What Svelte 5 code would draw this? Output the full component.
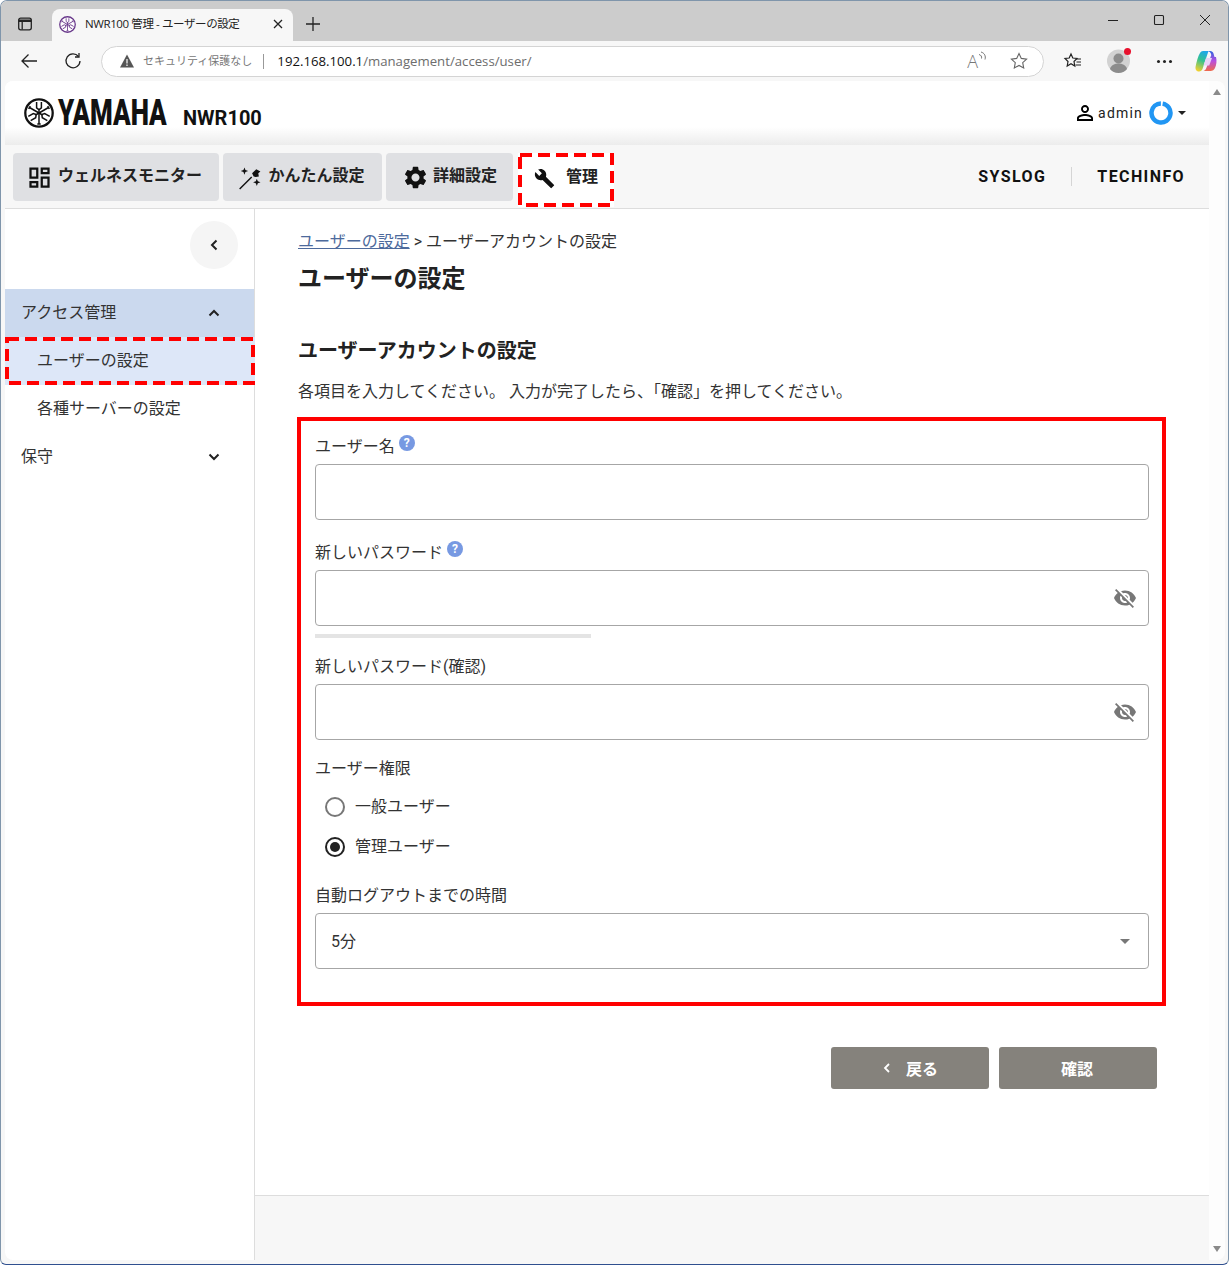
<script>
  const nav = [
    { label: 'ウェルネスモニター', icon: 'M19 5v2h-4V5h4M9 5v6H5V5h4m10 8v6h-4v-6h4M9 17v2H5v-2h4M21 3h-8v6h8V3zM11 3H3v10h8V3zm10 8h-8v10h8V11zm-10 4H3v6h8v-6z', w: 206 },
    { label: 'かんたん設定', icon: 'M2.800 21.800 13.500 11.200l.9.9L3.700 22.700zM14.300 8.300 18 4.600l3.700 2-1.900 1.700.5 2.700-2.700.5-1.900-.3zM7.500 3l.9 2.400 2.400.9-2.400.9-.9 2.400-.9-2.400-2.400-.9 2.400-.9zM18.500 13l.9 2.400 2.400.9-2.400.9-.9 2.400-.9-2.400-2.400-.9 2.400-.9z', w: 159 },
    { label: '詳細設定', icon: 'M19.14 12.94c.04-.3.06-.61.06-.94 0-.32-.02-.64-.07-.94l2.03-1.58c.18-.14.23-.41.12-.61l-1.92-3.32c-.12-.22-.37-.29-.59-.22l-2.39.96c-.5-.38-1.03-.7-1.62-.94l-.36-2.54c-.04-.24-.24-.41-.48-.41h-3.84c-.24 0-.43.17-.47.41l-.36 2.54c-.59.24-1.13.57-1.62.94l-2.39-.96c-.22-.08-.47 0-.59.22L2.74 8.87c-.12.21-.08.47.12.61l2.03 1.58c-.05.3-.09.63-.09.94s.02.64.07.94l-2.03 1.58c-.18.14-.23.41-.12.61l1.92 3.32c.12.22.37.29.59.22l2.39-.96c.5.38 1.03.7 1.62.94l.36 2.54c.05.24.24.41.48.41h3.84c.24 0 .44-.17.47-.41l.36-2.54c.59-.24 1.13-.56 1.62-.94l2.39.96c.22.08.47 0 .59-.22l1.92-3.32c.12-.22.07-.47-.12-.61l-2.01-1.58zM12 15.6c-1.98 0-3.6-1.62-3.6-3.6s1.62-3.6 3.6-3.6 3.6 1.62 3.6 3.6-1.62 3.6-3.6 3.6z', w: 127 }
  ];
  const eye = 'M12 7c2.76 0 5 2.24 5 5 0 .65-.13 1.26-.36 1.83l2.92 2.92c1.51-1.26 2.7-2.89 3.43-4.75-1.73-4.39-6-7.5-11-7.5-1.4 0-2.74.25-3.98.7l2.16 2.16C10.74 7.13 11.35 7 12 7zM2 4.27l2.28 2.28.46.46C3.08 8.3 1.78 10.02 1 12c1.73 4.39 6 7.5 11 7.5 1.55 0 3.03-.3 4.38-.84l.42.42L19.73 22 21 20.73 3.27 3 2 4.27zM7.53 9.8l1.55 1.55c-.05.21-.08.43-.08.65 0 1.66 1.34 3 3 3 .22 0 .44-.03.65-.08l1.55 1.55c-.67.33-1.41.53-2.2.53-2.76 0-5-2.24-5-5 0-.79.2-1.53.53-2.2zm4.31-.78l3.15 3.15.02-.16c0-1.66-1.34-3-3-3l-.17.01z';
  const forks = [0, 120, 240];
</script>

{#snippet emblem(size, color)}
  <svg width={size} height={size} viewBox="0 0 30 30" class="noflex">
    <circle cx="15" cy="15" r="13.700" fill="#fff" stroke={color} stroke-width="2.300" />
    {#each forks as a}
      <g transform="rotate({a} 15 15)" fill="none" stroke={color} stroke-width="1.500">
        <path d="M15 10.500V26M12.600 4v5.800l2.400 2 2.400-2V4M13.300 26h3.400" />
      </g>
    {/each}
  </svg>
{/snippet}

<div class="window">
  <div class="tabstrip">
    <svg class="tabicon" width="16" height="16" viewBox="0 0 16 16" fill="none" stroke="#222" stroke-width="1.300"><rect x="1.700" y="2.200" width="12.600" height="11.600" rx="2" /><path d="M1.700 4.700h12.600" stroke-width="2.600" /><path d="M5.200 5v8.600" /></svg>
    <div class="tab">
      <span class="fav">{@render emblem(17, '#6a3a8c')}</span>
      <span class="tabtitle">NWR100 管理 - ユーザーの設定</span>
      <svg width="12" height="12" viewBox="0 0 12 12" stroke="#222" stroke-width="1.300"><path d="M2 2l8 8M10 2l-8 8" /></svg>
    </div>
    <svg class="plus" width="16" height="16" viewBox="0 0 16 16" stroke="#222" stroke-width="1.300"><path d="M8 1v14M1 8h14" /></svg>
    <div class="wincontrols">
      <svg width="12" height="12" viewBox="0 0 12 12" stroke="#222"><path d="M1 6.500h10" /></svg>
      <svg width="12" height="12" viewBox="0 0 12 12" stroke="#222" fill="none" stroke-width="1.100"><rect x="1.500" y="1.500" width="9" height="9" rx="1" /></svg>
      <svg width="12" height="12" viewBox="0 0 12 12" stroke="#222"><path d="M1 1l10 10M11 1L1 11" /></svg>
    </div>
  </div>

  <div class="toolbar">
    <svg class="backicon" width="18" height="18" viewBox="0 0 18 18" fill="none" stroke="#222" stroke-width="1.300"><path d="M17 9H2M8.500 2.500 2 9l6.500 6.500" /></svg>
    <svg class="reload" width="18" height="18" viewBox="0 0 18 18" fill="none" stroke="#222" stroke-width="1.300"><path d="M14.500 4.500A7 7 0 1 0 16 9" /><path d="M15 1v4h-4" /></svg>
    <div class="omnibox">
      <svg width="16" height="16" viewBox="0 0 16 16"><path d="M8 1.500 15 14.500H1z" fill="#555" /><path d="M8 6v4.500M8 11.500v1.500" stroke="#fff" stroke-width="1.200" /></svg>
      <span class="insecure">セキュリティ保護なし</span>
      <span class="sep"></span>
      <span class="url"><b>192.168.100.1</b>/management/access/user/</span>
      <span class="grow"></span>
      <span class="readaloud">A<svg width="9" height="11" viewBox="0 0 9 11" fill="none" stroke="#777"><path d="M1 3.500c2 .5 3 2 2.500 4M3 1c3.500 1 5 4 4 7.500" /></svg></span>
      <svg width="20" height="20" viewBox="0 0 20 20" fill="none" stroke="#666" stroke-width="1.100"><path d="M10 2.500l2.300 4.900 5.300.7-3.900 3.600 1 5.300-4.700-2.600-4.700 2.600 1-5.300-3.900-3.600 5.300-.7z" /></svg>
    </div>
    <svg class="fav-star" width="20" height="20" viewBox="0 0 20 20" fill="none" stroke="#222" stroke-width="1.200"><path d="M8 3l1.800 4 4.200.5-3 3 .8 4.500L8 12.800 4.200 15l.8-4.500-3-3L6.200 7z" /><path d="M13 8h5M13.500 11h4.500M12.500 14h5.500" /></svg>
    <span class="avatar">
      <svg width="23" height="24" viewBox="0 0 23 24"><circle cx="11.500" cy="12" r="11.500" fill="#d2d2d2" /><circle cx="11.500" cy="9.500" r="5" fill="#8c8c8c" /><path d="M3 20c1-4 5-5.500 8.500-5.500S19 16 20 20c-2 2.500-5 4-8.500 4S5 22.500 3 20z" fill="#8c8c8c" /></svg>
      <i class="dot"></i>
    </span>
    <span class="more"><i></i><i></i><i></i></span>
    <svg class="copilot" width="24" height="24" viewBox="0 0 24 24">
      <defs>
        <linearGradient id="cpa" x1="0.600" y1="0" x2="0.300" y2="1"><stop offset="0" stop-color="#1fa8e8" /><stop offset="0.45" stop-color="#35c28f" /><stop offset="1" stop-color="#f2d02e" /></linearGradient>
        <linearGradient id="cpb" x1="0.500" y1="0" x2="0.500" y2="1"><stop offset="0" stop-color="#2a63e0" /><stop offset="0.5" stop-color="#b84fe0" /><stop offset="1" stop-color="#f06a4a" /></linearGradient>
      </defs>
      <path d="M9 2h5.500L8.500 20c-.6 1.600-1.800 2.500-3.300 2.500C2.600 22.500 1 20.500 1.600 17.500 2.500 13 4 7 6 4c.8-1.300 1.800-2 3-2z" fill="url(#cpa)" />
      <path d="M13 2h3c1.800 0 3 .8 3.600 2.800l.9 3.200H22c1 3.500.5 8-1 11-.9 2-2.400 3-4.500 3H9.500c1.300-.4 2.300-1.400 2.800-3L17.300 6c-.4-2.400-2-4-4.300-4z" fill="url(#cpb)" />
      <path d="M12 9h6l-2.800 7.500H9.500z" fill="#e9d4f7" />
    </svg>
  </div>

  <div class="viewport">
    <div class="page">
      <header class="head">
        <div class="brand">
          {@render emblem(30, '#111')}
          <span class="yamaha"><span>YAMAHA</span></span>
          <span class="model">NWR100</span>
        </div>
        <div class="user">
          <svg width="24" height="24" viewBox="0 0 24 24"><path d="M12 5.900c1.160 0 2.100.94 2.100 2.100s-.94 2.100-2.100 2.100S9.900 9.160 9.900 8s.94-2.100 2.100-2.100m0 9c2.970 0 6.100 1.460 6.100 2.100v1.100H5.900V17c0-.64 3.130-2.100 6.100-2.100M12 4C9.790 4 8 5.790 8 8s1.790 4 4 4 4-1.790 4-4-1.790-4-4-4zm0 9c-2.670 0-8 1.340-8 4v3h16v-3c0-2.660-5.330-4-8-4z" /></svg>
          <span class="uname">admin</span>
          <svg width="24" height="24" viewBox="0 0 24 24" fill="none"><circle cx="12" cy="12" r="9.500" stroke="#2196f3" stroke-width="4.500" stroke-dasharray="57.500 2.200" transform="rotate(-80 12 12)" /></svg>
          <i class="caret"></i>
        </div>
      </header>

      <nav class="nav">
        {#each nav as n}
          <button class="navbtn" style="width:{n.w}px">
            <svg width="27" height="27" viewBox="0 0 24 24" fill="#111"><path d={n.icon} /></svg>
            <span>{n.label}</span>
          </button>
        {/each}
        <button class="navbtn active">
          <svg width="21" height="21" viewBox="0 0 24 24" fill="#111"><path d="M22.700 19l-9.100-9.100c.9-2.300.4-5-1.500-6.900-2-2-5-2.400-7.400-1.300L9 6 6 9 1.600 4.700C.4 7.100.9 10.100 2.900 12.100c1.900 1.900 4.600 2.400 6.900 1.500l9.100 9.100c.4.4 1 .4 1.400 0l2.300-2.300c.5-.4.5-1.100.1-1.400z" /></svg>
          <span>管理</span>
          <svg class="dash" width="96" height="54" viewBox="0 0 96 54"><rect x="2" y="2" width="92" height="50" /></svg>
        </button>
        <span class="grow"></span>
        <a class="extlink">SYSLOG</a>
        <span class="navsep"></span>
        <a class="extlink">TECHINFO</a>
      </nav>

      <div class="body">
        <aside class="side">
          <div class="collapse-row">
            <span class="circle"><svg width="16" height="16" viewBox="0 0 16 16" fill="none" stroke="#222" stroke-width="2"><path d="M10.500 3.500 6 8l4.500 4.500" /></svg></span>
          </div>
          <div class="row group open"><span>アクセス管理</span><svg width="16" height="16" viewBox="0 0 16 16" fill="none" stroke="#222" stroke-width="2"><path d="M3.500 10.500 8 6l4.500 4.500" /></svg></div>
          <div class="row item selected">
            <span>ユーザーの設定</span>
            <svg class="dash" width="250" height="48" viewBox="0 0 250 48"><rect x="2" y="2" width="246" height="44" /></svg>
          </div>
          <div class="row item"><span>各種サーバーの設定</span></div>
          <div class="row group"><span>保守</span><svg width="16" height="16" viewBox="0 0 16 16" fill="none" stroke="#222" stroke-width="2"><path d="M3.500 5.500 8 10l4.500-4.500" /></svg></div>
        </aside>

        <main class="main">
          <div class="content">
            <div class="crumb"><a>ユーザーの設定</a> &gt; ユーザーアカウントの設定</div>
            <h1>ユーザーの設定</h1>
            <h2>ユーザーアカウントの設定</h2>
            <p class="desc">各項目を入力してください。 入力が完了したら、「確認」を押してください。</p>

            <form class="box">
              <label class="lab">ユーザー名<span class="help">?</span></label>
              <div class="input mb20"></div>

              <label class="lab">新しいパスワード<span class="help">?</span></label>
              <div class="input"><svg width="24" height="24" viewBox="0 0 24 24" fill="#777"><path d={eye} /></svg></div>
              <div class="meter"></div>

              <label class="lab">新しいパスワード(確認)</label>
              <div class="input mb16"><svg width="24" height="24" viewBox="0 0 24 24" fill="#777"><path d={eye} /></svg></div>

              <label class="lab">ユーザー権限</label>
              <div class="radios">
                <div class="radio"><i class="rb"></i><span>一般ユーザー</span></div>
                <div class="radio"><i class="rb on"></i><span>管理ユーザー</span></div>
              </div>

              <label class="lab">自動ログアウトまでの時間</label>
              <div class="input select"><span>5分</span><i class="selcaret"></i></div>
            </form>

            <div class="actions">
              <button class="act"><svg width="14" height="14" viewBox="0 0 14 14" fill="none" stroke="#fff" stroke-width="1.800"><path d="M9 3 5 7l4 4" /></svg><span>戻る</span></button>
              <button class="act"><span>確認</span></button>
            </div>
          </div>
          <footer class="foot"></footer>
        </main>
      </div>
    </div>
    <div class="scrollbar"><i class="up"></i><i class="down"></i></div>
  </div>
</div>

<style>
  :global(body) { margin: 0; }
  * { box-sizing: border-box; }
  .noflex { flex: none; display: block; }
  .grow { flex: 1; }
  .window {
    width: 1229px; height: 1265px; background: #f7f7f7; display: flex; flex-direction: column;
    font-family: Roboto, "Noto Sans CJK JP", sans-serif; color: #333; overflow: hidden;
    border: 1px solid #7f95ab; border-bottom-color: #2f4f8f; border-radius: 7px 7px 6px 6px;
  }
  .tabstrip { height: 40px; background: #cccccc; display: flex; align-items: flex-end; flex: none; position: relative; }
  .tabicon { margin: 0 19px 9px 16px; }
  .tab {
    width: 241px; height: 32px; background: #f7f7f7; border-radius: 8px 8px 0 0; display: flex; align-items: center;
    padding: 0 9px 2px 7px; font: 11.500px/16px "Open Sans", "Noto Sans CJK JP", sans-serif; color: #222;
  }
  .fav { margin-right: 9px; flex: none; }
  .tabtitle { flex: 1; white-space: nowrap; overflow: hidden; letter-spacing: -0.400px; }
  .plus { margin: 0 0 9px 12px; }
  .wincontrols { margin-left: auto; display: flex; gap: 34px; margin-right: 17px; align-self: center; margin-top: -3px; }
  .toolbar { height: 40px; flex: none; display: flex; align-items: center; background: #f7f7f7; padding-left: 19px; }
  .reload { margin-left: 26px; }
  .omnibox {
    margin-left: 19px; width: 943px; height: 31px; background: #fff; border: 1px solid #d4d4d4; border-radius: 16px;
    display: flex; align-items: center; padding: 0 14px 0 17px; font-family: "Open Sans", "Noto Sans CJK JP", sans-serif;
  }
  .insecure { color: #777; margin: 0 0 0 8px; font-size: 11px; line-height: 16px; white-space: nowrap; }
  .sep { width: 1px; height: 15px; background: #999; margin: 0 13px 0 11px; }
  .url { color: #6d6d6d; white-space: nowrap; font-size: 13.200px; line-height: 16px; }
  .url b { font-weight: 400; color: #111; }
  .readaloud { color: #777; font-size: 18px; line-height: 20px; font-weight: 300; margin-right: 22px; display: flex; align-items: flex-start; }
  .fav-star { margin-left: 19px; }
  .avatar { position: relative; margin-left: 24px; display: block; height: 24px; }
  .dot { position: absolute; right: -1px; top: -1px; width: 7px; height: 7px; border-radius: 50%; background: #e8112d; }
  .more { display: flex; gap: 3px; margin-left: 27px; }
  .more i { width: 3px; height: 3px; background: #222; border-radius: 50%; }
  .copilot { margin-left: 22px; }

  .viewport { flex: 1; display: flex; margin: 0 3px 4px 4px; min-height: 0; }
  .page { width: 1204px; display: flex; flex-direction: column; background: #fff; border-radius: 8px 0 0 8px; overflow: hidden; }
  .scrollbar { width: 16px; background: #fdfdfd; display: flex; flex-direction: column; justify-content: space-between; align-items: center; padding: 8px 0; border-radius: 0 8px 8px 0; }
  .up { border: 4.500px solid transparent; border-top: 0; border-bottom: 6px solid #8a8a8a; }
  .down { border: 4.500px solid transparent; border-bottom: 0; border-top: 6px solid #8a8a8a; }

  .head {
    height: 64px; flex: none; display: flex; align-items: center; justify-content: space-between;
    background: linear-gradient(#fff 0, #fff 72%, #ececec 100%); padding: 0 23px 0 19px;
  }
  .brand { display: flex; align-items: center; }
  .yamaha { display: block; width: 109px; height: 36px; margin-left: 4px; }
  .yamaha span {
    display: inline-block; font: 900 36px/36px Roboto, sans-serif; color: #111; transform: scaleX(0.720);
    transform-origin: left center; white-space: nowrap;
  }
  .model { font: 700 20px/24px Roboto, sans-serif; color: #111; margin: 10px 0 0 16px; }
  .user { display: flex; align-items: center; color: #222; font-size: 14px; }
  .uname { margin: 0 6px 0 1px; letter-spacing: 1.200px; }
  .caret { margin-left: 5px; border: 4px solid transparent; border-top: 4px solid #222; border-bottom: 0; }

  .nav { height: 64px; flex: none; display: flex; align-items: flex-start; background: #f7f7f7; border-bottom: 1px solid #ddd; padding: 8px 24px 0 8px; }
  .navbtn {
    height: 48px; margin-right: 4px; border: 0; border-radius: 4px; background: #dfe0e3; display: flex; align-items: center; justify-content: center; gap: 5px;
    font: 700 16px/24px Roboto, "Noto Sans CJK JP", sans-serif; color: #222; padding: 0 4px 0 0; position: relative;
  }
  .navbtn:nth-child(3) { padding-right: 0; gap: 4px; }
  .navbtn span { padding-bottom: 2px; }
  .navbtn.active { width: 96px; height: 54px; margin-left: 1px; background: #fff; gap: 11px; padding: 0 0 4px; border-radius: 0; }
  .dash { position: absolute; left: 0; top: 0; pointer-events: none; }
  .dash rect { fill: none; stroke: #f00; stroke-width: 4; stroke-dasharray: 12 6; }
  .extlink { font: 700 16px/24px Roboto, sans-serif; letter-spacing: 1.400px; color: #111; margin-top: 12px; }
  .navsep { width: 1px; height: 19px; background: #d5d5d5; margin: 14px 25px 0 25px; }

  .body { flex: 1; display: flex; min-height: 0; }
  .side { width: 250px; flex: none; border-right: 1px solid #ddd; font-size: 16px; color: #333; }
  .collapse-row { display: flex; justify-content: flex-end; padding: 12px 16px 20px 0; }
  .circle { width: 48px; height: 48px; border-radius: 50%; background: #f5f5f5; display: flex; align-items: center; justify-content: center; }
  .row { height: 48px; display: flex; align-items: center; justify-content: space-between; position: relative; }
  .row span { margin-bottom: 4px; }
  .group { padding: 0 32px 0 16px; }
  .group.open { background: #cbd9ee; }
  .item { padding-left: 32px; }
  .selected { background: #dde7f8; width: 250px; }

  .main { flex: 1; display: flex; flex-direction: column; min-width: 0; }
  .content { flex: 1; padding: 21px 43px 0; }
  .crumb { font-size: 16px; line-height: 24px; }
  .crumb a { color: #4d6a9c; text-decoration: underline; }
  h1 { margin: 9px 0 0; font-size: 24px; line-height: 32px; font-weight: 700; color: #222; }
  h2 { margin: 42px 0 0; font-size: 20px; line-height: 28px; font-weight: 700; color: #222; }
  .desc { margin: 15px 0 0; font-size: 16px; line-height: 24px; white-space: nowrap; }
  .box { margin: 13px 0 0 -1px; border: 4px solid #f00; padding: 13px 13px 34px 14px; height: 589px; }
  .lab { display: flex; align-items: center; height: 24px; font-size: 16px; margin-bottom: 6px; color: #333; padding-bottom: 2px; }
  .help {
    width: 16px; height: 16px; border-radius: 50%; background: #7799e2; color: #fff; margin: -4px 0 0 4px;
    font: 700 12px/16px Roboto, sans-serif; text-align: center;
  }
  .input { height: 56px; border: 1px solid #a6a6a6; border-radius: 4px; display: flex; align-items: center; justify-content: flex-end; padding: 0 11px; }
  .mb20 { margin-bottom: 20px; }
  .mb16 { margin-bottom: 16px; }
  .meter { width: 276px; height: 4px; background: #e4e4e4; margin: 8px 0 16px; }
  .radios { margin: 7px 0 16px; }
  .radio { height: 40px; display: flex; align-items: center; gap: 10px; padding-left: 10px; font-size: 16px; color: #333; }
  .radio span { margin-bottom: 4px; }
  .rb { width: 20px; height: 20px; border-radius: 50%; border: 2px solid #777; display: flex; align-items: center; justify-content: center; }
  .rb.on { border-color: #222; }
  .rb.on::after { content: ""; width: 10px; height: 10px; border-radius: 50%; background: #222; }
  .select { justify-content: space-between; padding: 0 18px 2px 15px; font-size: 16px; }
  .selcaret { border: 5px solid transparent; border-top: 5px solid #777; border-bottom: 0; margin-top: 2px; }
  .actions { display: flex; justify-content: flex-end; gap: 10px; margin: 41px 9px 0 0; }
  .act {
    width: 158px; height: 42px; background: #85827c; color: #fff; border: 0; border-radius: 3px; display: flex; align-items: center; justify-content: center; gap: 12px;
    font: 700 16px/24px Roboto, "Noto Sans CJK JP", sans-serif; padding: 0 2px 0 0;
  }
  .act span { margin-top: 3px; }
  .foot { height: 65px; flex: none; background: #f7f7f7; border-top: 1px solid #ddd; }
</style>
